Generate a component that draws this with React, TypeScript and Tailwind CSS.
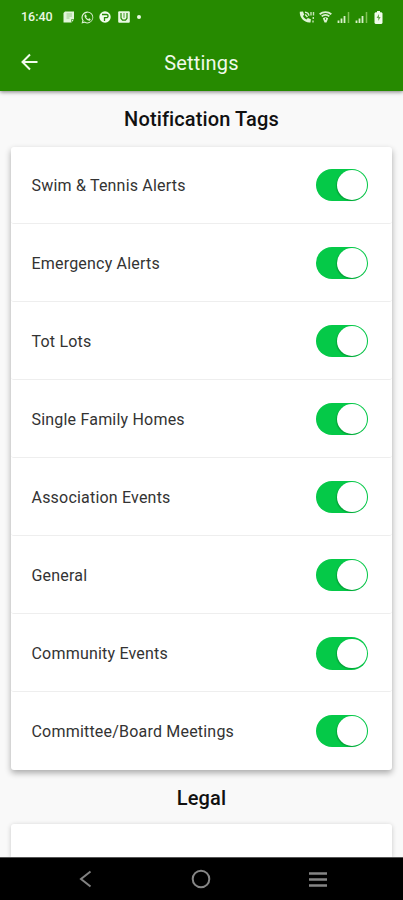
import React from "react";

const tags = [
  "Swim & Tennis Alerts",
  "Emergency Alerts",
  "Tot Lots",
  "Single Family Homes",
  "Association Events",
  "General",
  "Community Events",
  "Committee/Board Meetings",
];

function Toggle() {
  return (
    <span role="switch" aria-checked="true" className="mb-px flex h-[32.500px] w-[52.500px] items-center justify-end rounded-full bg-[#05c948] pr-[1.200px]">
      <span className="size-[29.500px] rounded-full bg-white shadow-[-1px_1px_1px_rgba(0,80,20,0.3)]" />
    </span>
  );
}

function NotesIcon() {
  return (
    <svg width="12" height="12" viewBox="0 0 12 12" fill="none">
      <path d="M2 .5h9v8L8.500 11.500H.5V2z" fill="#e2f5da" />
      <path d="M3.500 3h5.500M3.500 5h5.500M3.500 7h3" stroke="#8cc279" strokeWidth=".8" />
      <path d="M8.500 11.500V8.500H11" stroke="#4c9d32" strokeWidth=".8" />
    </svg>
  );
}

function WhatsAppIcon() {
  return (
    <svg width="13" height="13" viewBox="0 0 24 24" fill="#dcf2d3">
      <path d="M12 .8A11 11 0 0 0 2.600 17.500L1 23.200l5.800-1.500A11 11 0 1 0 12 .8zm0 2.200a9 9 0 1 1-4.900 16.500l-3 .8.800-2.900A9 9 0 0 1 12 3z" />
      <path d="M8.300 6.500c-.5 0-1.800.9-1.800 2.800 0 3.600 5 8.500 8.700 8.500 1.700 0 2.700-1.200 2.700-2.300 0-.5-2.600-1.900-3-1.900-.5 0-1.100 1.500-1.600 1.500-1 0-3.700-2.500-3.700-3.400 0-.4 1-.9 1-1.500 0-.4-1-3.700-2.300-3.700z" />
    </svg>
  );
}

function ParkingIcon() {
  return (
    <svg width="12" height="12" viewBox="0 0 12 12" fill="none">
      <circle cx="6" cy="6" r="5.700" fill="#f1fcec" />
      <path d="M3 3.500h4.500a1.600 1.600 0 0 1 0 3.200H5.500V10" stroke="#268a05" strokeWidth="1.300" />
    </svg>
  );
}

function AlertBoxIcon() {
  return (
    <svg width="12" height="12" viewBox="0 0 12 12" fill="none">
      <rect x=".2" y=".2" width="11.600" height="11.600" rx="1" fill="#e9f9e2" />
      <path d="M3 2v5.200l1.500 2h3l1.500-2V2" stroke="#268a05" strokeWidth="1.200" />
      <path d="M6 2v4.800" stroke="#4c9d32" strokeWidth="1" />
    </svg>
  );
}

function CallIcon() {
  return (
    <svg width="16" height="13" viewBox="0 0 16 13" fill="none">
      <path d="M.8.800 4 .5l1.200 3.200L4 5c.8 1.700 1.800 2.700 3.400 3.500l1.500-1.500 3 1.300-.4 3.200C5.700 12.400.3 6.500.8.800z" fill="#def4d5" />
      <path d="M6 1.200c2.500.2 3.800 1.600 3.900 3.600M6.200 3.500 8.500 6" stroke="#d8f0ce" strokeWidth="1.400" />
      <path d="M12 1v3.500M14.500 1v3.500M14.300 6v2M14 9.500v2" stroke="#c4e4b5" strokeWidth="1.400" />
    </svg>
  );
}

function WifiIcon() {
  return (
    <svg width="13" height="12" viewBox="0 0 13 12" fill="none">
      <path d="M.7 3.200C4 .4 9 .4 12.300 3.200M2.700 5.400c2.200-1.900 5.400-1.900 7.600 0" stroke="#dbf1d1" strokeWidth="1.900" />
      <path d="M3.800 7.300c1.500-1.400 3.900-1.400 5.400 0L7.500 11.500h-2z" fill="#dbf1d1" />
      <path d="M6.500 7.200v1.500" stroke="#268a05" />
    </svg>
  );
}

function SignalIcon() {
  return (
    <svg width="13" height="12" viewBox="0 0 13 12" fill="none">
      <path d="M1.500 9.500V12M4.500 7.500V12M7.500 5V12" stroke="#d8efc9" strokeWidth="1.800" />
      <path d="M11.500 1V12" stroke="#7fc052" strokeWidth="1.500" />
    </svg>
  );
}

function BatteryIcon() {
  return (
    <svg width="9" height="13" viewBox="0 0 9 13">
      <path d="M3 0h3v1.300h1.500l1 1V12l-1 1h-6l-1-1V2.300l1-1H3z" fill="#f1fbeb" />
      <path d="M5 3 2.600 7H4.300v3L6.600 6H5z" fill="#68a94c" />
    </svg>
  );
}

export default function App() {
  return (
    <main className="flex h-[900px] w-[403px] flex-col overflow-hidden bg-[#f9f9f9] font-[Roboto,sans-serif] text-black">
      <header className="relative z-10 h-[90.500px] shrink-0 bg-[#268a00] text-white shadow-[0_1px_4px_rgba(0,0,0,0.5)]">
        <div className="flex h-[34px] items-center justify-between pr-[20px] pl-[21px]">
          <div className="flex items-center">
            <span className="w-[42px] text-[12.500px] leading-4 font-medium text-[#eaf8e4]">16:40</span>
            <NotesIcon />
            <span className="ml-[6px]"><WhatsAppIcon /></span>
            <span className="ml-[5px]"><ParkingIcon /></span>
            <span className="ml-[7px]"><AlertBoxIcon /></span>
            <span className="ml-[6.500px] size-1 rounded-full bg-[#e9f9e2]" />
          </div>
          <div className="flex items-center">
            <CallIcon />
            <span className="ml-[4px]"><WifiIcon /></span>
            <span className="ml-[5px]"><SignalIcon /></span>
            <span className="ml-[5px]"><SignalIcon /></span>
            <span className="ml-[6px]"><BatteryIcon /></span>
          </div>
        </div>
        <div className="grid h-[56px] grid-cols-[1fr_auto_1fr] items-center px-[21px]">
          <svg width="17" height="18" viewBox="0 0 17 18" fill="none" stroke="#f2fbee" strokeWidth="2">
            <path d="M16.500 9H1.800M9 1.500 1.500 9 9 16.500" />
          </svg>
          <h1 className="pt-[2px] text-[20px] leading-6 font-normal tracking-[0.2px] text-[#f0faeb]">Settings</h1>
        </div>
      </header>

      <section className="shrink-0 px-[11px]">
        <h2 className="flex h-[56.500px] items-center justify-center text-[20px] leading-6 font-medium tracking-[0.12px] text-[#111]">Notification Tags</h2>
        <ul className="flex flex-col rounded-[3px] bg-white shadow-[0_3px_6px_rgba(0,0,0,0.32)]">
          {tags.map((tag) => (
            <li key={tag} className="flex h-[78.100px] items-center justify-between rounded-[3px] border-b border-[#eeeeee] pt-[2.500px] pr-[24px] pl-[20.500px] first:h-[76.500px] first:pt-px last:border-b-0 last:pt-px">
              <span className="pt-[0.500px] text-[16px] leading-5 tracking-[0.2px] text-[#333]">{tag}</span>
              <Toggle />
            </li>
          ))}
        </ul>
      </section>

      <section className="flex min-h-0 flex-1 flex-col px-[11px]">
        <h2 className="flex h-[54px] shrink-0 items-center justify-center pt-[2px] text-[20px] leading-6 font-medium tracking-[0.12px] text-[#111]">Legal</h2>
        <div className="flex-1 rounded-t-[3px] bg-white shadow-[0_1px_5px_rgba(0,0,0,0.2)]" />
      </section>

      <nav className="relative z-10 flex h-[43px] shrink-0 items-center justify-between border-t border-[#555] bg-black pr-[76.500px] pl-[79px]">
        <svg width="13" height="18" viewBox="0 0 13 18" fill="none" stroke="#828282" strokeWidth="2">
          <path d="M11.500 1.500 2 9l9.500 7.500" />
        </svg>
        <svg width="20" height="20" viewBox="0 0 20 20" fill="none" stroke="#868686" strokeWidth="2" className="ml-[2px]">
          <circle cx="10" cy="10" r="8.300" />
        </svg>
        <svg width="18" height="16" viewBox="0 0 18 16" fill="none" stroke="#858585" strokeWidth="2.300">
          <path d="M0 2.500h18M0 8.500h18M0 14.500h18" />
        </svg>
      </nav>
    </main>
  );
}
